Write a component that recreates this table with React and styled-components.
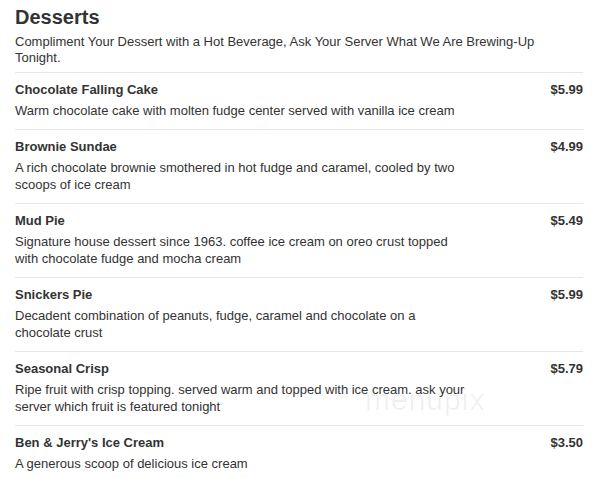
import React from 'react';
import styled, { createGlobalStyle } from 'styled-components';

const GlobalStyle = createGlobalStyle`
  body {
    margin: 0;
    background: #fff;
    font-family: "Liberation Sans", Arial, sans-serif;
    color: #333;
  }
`;

const Page = styled.div`
  position: relative;
  padding: 0 9px 0 15px;
`;

const Title = styled.h1`
  margin: 5px 0 0;
  font-size: 20px;
  line-height: 24px;
  font-weight: bold;
  color: #333;
`;

const Intro = styled.p`
  margin: 5px 0 0;
  padding-bottom: 6px;
  font-size: 13px;
  line-height: 16px;
  border-bottom: 1px solid #e6e6e6;
`;

const Item = styled.div`
  display: flex;
  justify-content: space-between;
  align-items: flex-start;
  padding: 8px 0 10px;
  border-bottom: ${p => (p.last ? 'none' : '1px solid #e6e6e6')};
`;

const Info = styled.div`
  flex: 1;
  display: flex;
  flex-direction: column;
  gap: 3px;
`;

const Name = styled.div`
  font-size: 13px;
  line-height: 18px;
  font-weight: bold;
`;

const Desc = styled.div`
  font-size: 13px;
  line-height: 17px;
  max-width: 455px;
`;

const Price = styled.div`
  font-size: 13px;
  line-height: 18px;
  font-weight: bold;
  padding-left: 12px;
`;

const Watermark = styled.div`
  position: absolute;
  left: 365px;
  top: 378px;
  font-size: 30px;
  letter-spacing: 1px;
  color: rgba(0, 0, 0, 0.06);
  pointer-events: none;
`;

const items = [
  ['Chocolate Falling Cake', 'Warm chocolate cake with molten fudge center served with vanilla ice cream', '$5.99'],
  ['Brownie Sundae', 'A rich chocolate brownie smothered in hot fudge and caramel, cooled by two scoops of ice cream', '$4.99'],
  ['Mud Pie', 'Signature house dessert since 1963. coffee ice cream on oreo crust topped with chocolate fudge and mocha cream', '$5.49'],
  ['Snickers Pie', 'Decadent combination of peanuts, fudge, caramel and chocolate on a chocolate crust', '$5.99'],
  ['Seasonal Crisp', 'Ripe fruit with crisp topping. served warm and topped with ice cream. ask your server which fruit is featured tonight', '$5.79'],
  ["Ben & Jerry's Ice Cream", 'A generous scoop of delicious ice cream', '$3.50'],
];

export default function App() {
  return (
    <Page>
      <GlobalStyle />
      <Title>Desserts</Title>
      <Intro>
        Compliment Your Dessert with a Hot Beverage, Ask Your Server What We Are Brewing-Up Tonight.
      </Intro>
      {items.map(([name, desc, price], i) => (
        <Item key={name} last={i === items.length - 1}>
          <Info>
            <Name>{name}</Name>
            <Desc>{desc}</Desc>
          </Info>
          <Price>{price}</Price>
        </Item>
      ))}
      <Watermark>menupix</Watermark>
    </Page>
  );
}
